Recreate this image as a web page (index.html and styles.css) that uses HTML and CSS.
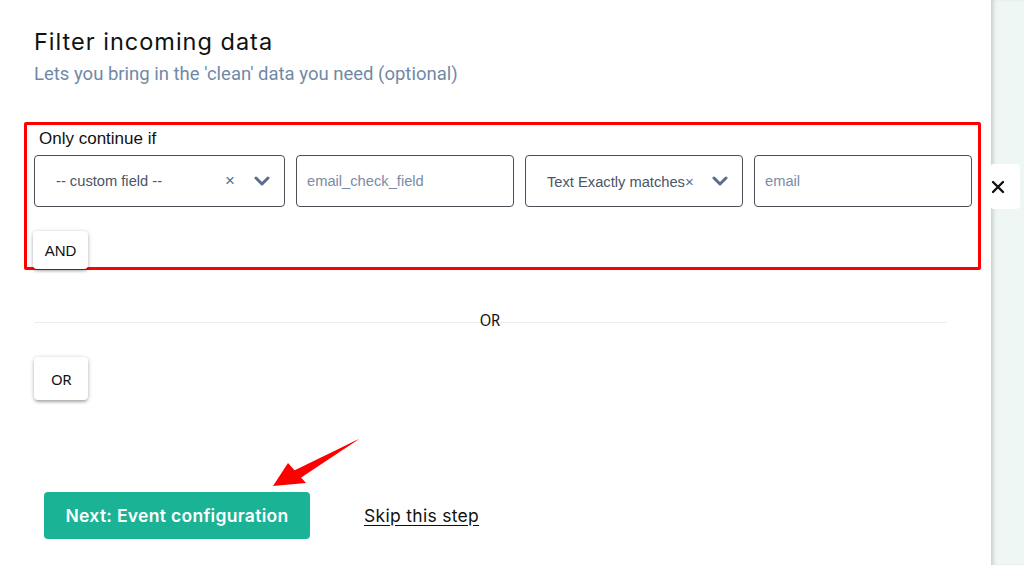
FILE: index.html
```html
<!DOCTYPE html>
<html>
<head>
<meta charset="utf-8">
<link rel="stylesheet" href="styles.css">
</head>
<body>
<div class="page">
  <main class="main">
    <h1 class="title">Filter incoming data</h1>
    <p class="subtitle">Lets you bring in the 'clean' data you need (optional)</p>

    <div class="group-wrap">
      <section class="group">
        <div class="group-label">Only continue if</div>
        <div class="row">
          <div class="field select">
            <span class="val">-- custom field --</span>
            <span class="clear">×</span>
            <svg class="chev" width="16" height="10" viewBox="0 0 16 10"><path d="M2 2 L8 8 L14 2" fill="none" stroke="#5a6e8c" stroke-width="3" stroke-linecap="round" stroke-linejoin="round"/></svg>
          </div>
          <div class="field input"><span class="ph">email_check_field</span></div>
          <div class="field select">
            <span class="val">Text Exactly matches<span class="clear-inline">×</span></span>
            <svg class="chev" width="16" height="10" viewBox="0 0 16 10"><path d="M2 2 L8 8 L14 2" fill="none" stroke="#5a6e8c" stroke-width="3" stroke-linecap="round" stroke-linejoin="round"/></svg>
          </div>
          <div class="field input"><span class="ph">email</span></div>
        </div>
        <button class="chip and">AND</button>
      </section>
      <button class="remove">
        <svg width="14" height="14" viewBox="0 0 14 14"><path d="M2 2 L12 12 M12 2 L2 12" stroke="#111" stroke-width="2.4" stroke-linecap="round"/></svg>
      </button>
    </div>

    <div class="divider"><span>OR</span></div>

    <button class="chip or">OR</button>

    <div class="actions">
      <button class="next">Next: Event configuration</button>
      <a class="skip" href="#">Skip this step</a>
    </div>

    <svg class="arrow" width="100" height="56" viewBox="0 0 100 56">
      <path d="M86 0 L22 33 L26 40 Z" fill="#f00"/>
      <path d="M0 47 L15 24 L33 44 Z" fill="#f00"/>
      <path d="M86 0 L16 34 L24 40 Z" fill="#f00"/>
    </svg>
  </main>
  <aside class="side"></aside>
</div>
</body>
</html>
```

FILE: styles.css
```css
html, body { margin: 0; padding: 0; }
body { background: #fff; width: 1024px; height: 565px; overflow: hidden; }
.page { display: flex; height: 565px; }
.main {
  position: relative;
  width: 991px;
  flex: none;
  padding: 27px 0 0 34px;
  box-sizing: border-box;
}
.side {
  flex: 1;
  background: #eff7f5;
  box-shadow: inset 4px 0 4px -2px rgba(0,0,0,0.18);
}
.title {
  margin: 0;
  font-family: "Inter", "Open Sans", sans-serif;
  font-weight: 400;
  font-size: 23.5px;
  line-height: 30px;
  color: #111;
  letter-spacing: 1px;
}
.subtitle {
  margin: 5px 0 0;
  font-family: Roboto, sans-serif;
  font-size: 18.5px;
  line-height: 24px;
  color: #7189a6;
}
.group-wrap { position: relative; margin: 36px 0 0 -10px; }
.group {
  width: 957px;
  box-sizing: border-box;
  border: 3px solid #ff0000;
  border-radius: 2px;
  padding: 0 7px 0 7px;
  height: 148px;
}
.group-label {
  font-family: "Liberation Sans", Arial, sans-serif;
  font-size: 17px;
  line-height: 24px;
  color: #111;
  margin: 2px 0 0 5px;
}
.row {
  display: grid;
  grid-template-columns: 251px 218px 218px 218px;
  column-gap: 11px;
  margin-top: 4px;
}
.field {
  height: 52px;
  box-sizing: border-box;
  border: 1px solid #4b4f55;
  border-radius: 4px;
  display: flex;
  align-items: center;
  font-family: "Liberation Sans", Arial, sans-serif;
  font-size: 14.7px;
  color: #4a5568;
}
.select { padding: 0 14px 0 21px; }
.select .val { flex: 1; }
.clear { color: #5a6e8c; font-size: 17px; margin-right: 19px; }
.clear-inline { color: #5a6e8c; font-size: 15px; }
.chev { flex: none; }
.input { padding: 0 10px; }
.ph { color: #7a8ca8; }
.chip {
  display: block;
  background: #fff;
  border: none;
  border-radius: 4px;
  box-shadow: 0 1px 4px rgba(0,0,0,0.28), 0 3px 3px -1px rgba(0,0,0,0.18);
  font-family: "Liberation Sans", Arial, sans-serif;
  font-size: 15px;
  color: #111;
  padding: 0;
  cursor: pointer;
}
.and { width: 55px; height: 38px; margin: 24px 0 0 -1px; }
.remove {
  position: absolute;
  left: 966px;
  top: 42px;
  width: 30px;
  height: 45px;
  border: none;
  border-radius: 4px;
  background: #fff;
  display: flex;
  align-items: center;
  justify-content: flex-start;
  padding: 0 0 0 1px;
}
.divider {
  position: relative;
  width: 913px;
  height: 1px;
  background: #ececec;
  margin-top: 52px;
}
.divider span {
  position: absolute;
  left: 445px;
  top: -13px;
  font-family: "Noto Sans", sans-serif;
  font-size: 16px;
  color: #111;
  letter-spacing: -0.5px;
  transform: scaleX(0.92);
}
.or {
  width: 54px;
  height: 43px;
  margin-top: 34px;
  font-family: "Noto Sans", sans-serif;
  font-size: 15px;
  letter-spacing: -0.5px;
}
.actions {
  display: flex;
  align-items: center;
  margin: 92px 0 0 10px;
}
.next {
  width: 266px;
  height: 47px;
  border: none;
  border-radius: 4px;
  background: #1bb395;
  color: #fff;
  font-family: "Inter", "Open Sans", sans-serif;
  font-weight: 600;
  font-size: 17.5px;
  letter-spacing: 0.3px;
  padding: 0;
}
.skip {
  margin-left: 54px;
  font-family: "Inter", "Open Sans", sans-serif;
  font-size: 17.5px;
  letter-spacing: 0.3px;
  color: #111;
  text-decoration: underline;
  text-underline-offset: 3px;
}
.arrow { position: absolute; left: 273px; top: 439px; }
```
